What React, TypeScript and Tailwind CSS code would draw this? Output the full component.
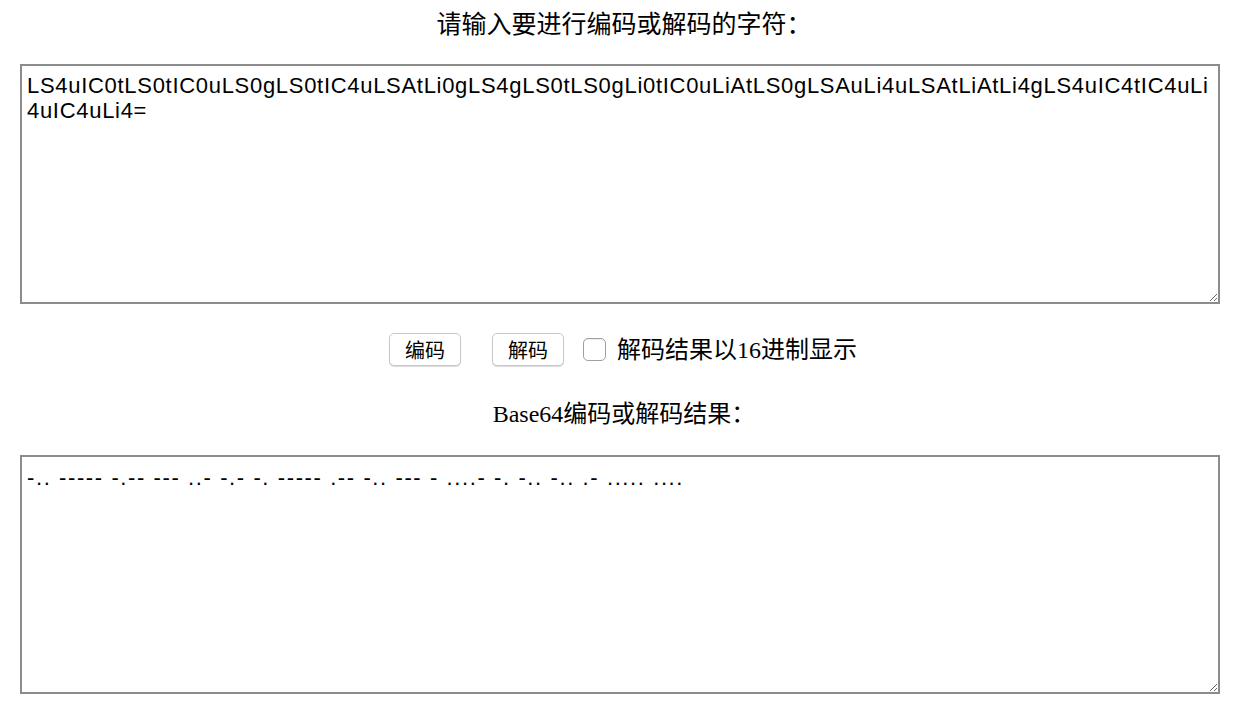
import React from "react";

const INPUT =
  "LS4uIC0tLS0tIC0uLS0gLS0tIC4uLSAtLi0gLS4gLS0tLS0gLi0tIC0uLiAtLS0gLSAuLi4uLSAtLiAtLi4gLS4uIC4tIC4uLi4uIC4uLi4=";
const OUTPUT = "-.. ----- -.-- --- ..- -.- -. ----- .-- -.. --- - ....- -. -.. -.. .- ..... ....";

export default function App() {
  return (
    <div className="w-[1234px] h-[714px] bg-white pl-5 text-black overflow-hidden">
      <div className="pt-[10px] pr-[6px] text-center text-[25px] leading-[29px] font-['Liberation_Serif','Noto_Sans_CJK_SC',serif]">
        请输入要进行编码或解码的字符：
      </div>
      <textarea
        readOnly
        defaultValue={INPUT}
        className="mt-[25px] block w-[1200px] h-[240px] border-2 border-[#8c8c8c] px-[5px] pt-[7px] text-[22px] leading-[25px] tracking-[0.7px] font-['Liberation_Sans',sans-serif] resize-y outline-none break-all"
      />
      <div className="mt-[29px] pr-[8px] flex items-center justify-center h-[33px]">
        <button className="w-[72px] h-[33px] rounded-[5px] border border-[#c8c8c8] bg-white shadow-[0_1px_1px_rgba(0,0,0,0.15)] text-[20px] font-['Noto_Sans_CJK_SC',sans-serif] leading-none">
          编码
        </button>
        <button className="ml-[31px] w-[72px] h-[33px] rounded-[5px] border border-[#c8c8c8] bg-white shadow-[0_1px_1px_rgba(0,0,0,0.15)] text-[20px] font-['Noto_Sans_CJK_SC',sans-serif] leading-none">
          解码
        </button>
        <span className="ml-[19px] w-[23px] h-[23px] rounded-[5px] border border-[#a0a0a0] bg-white shadow-[inset_0_1px_1px_rgba(0,0,0,0.08)]" />
        <span className="ml-[11px] text-[24px] leading-[28px] font-['Liberation_Serif','Noto_Sans_CJK_SC',serif]">
          解码结果以16进制显示
        </span>
      </div>
      <div className="mt-[34px] pr-[6px] text-center text-[24px] leading-[28px] font-['Liberation_Serif','Noto_Sans_CJK_SC',serif]">
        Base64编码或解码结果：
      </div>
      <textarea
        readOnly
        defaultValue={OUTPUT}
        className="mt-[27px] block w-[1200px] h-[239px] border-2 border-[#8c8c8c] px-[5px] pt-[8px] text-[22px] leading-[25px] tracking-[1.6px] font-['Liberation_Sans',sans-serif] resize-y outline-none"
      />
    </div>
  );
}
